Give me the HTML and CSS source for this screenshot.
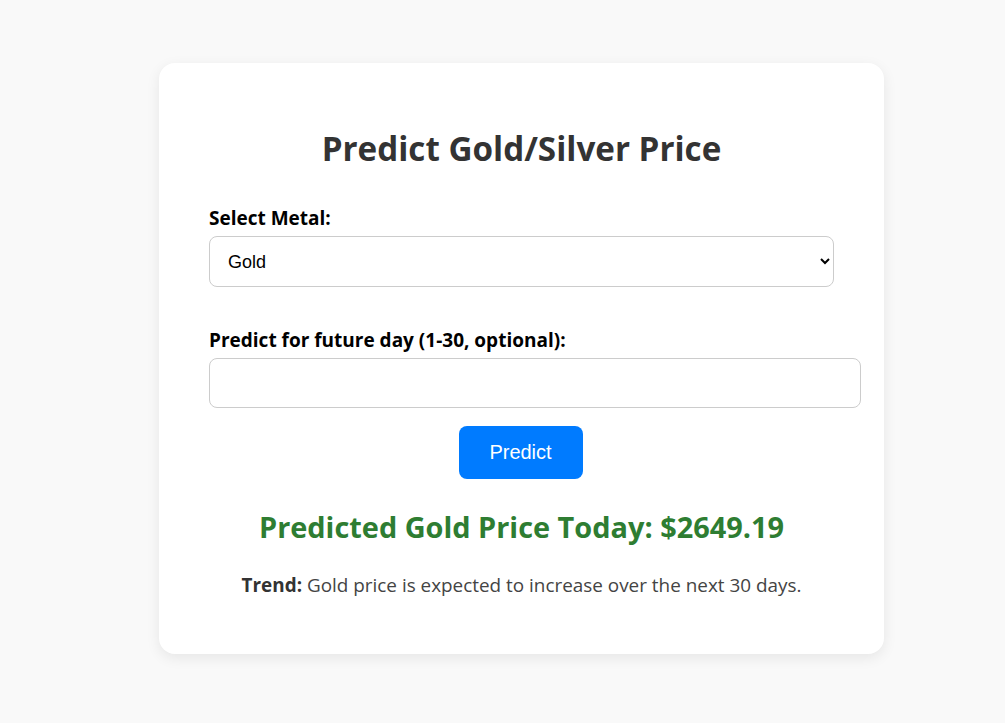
FILE: index.html
```html
<!DOCTYPE html>
<html lang="en">
<head>
<meta charset="utf-8">
<title>Predict Gold/Silver Price</title>
<link rel="stylesheet" href="styles.css">
</head>
<body>
<div class="card">
  <h1 class="title">Predict Gold/Silver Price</h1>
  <form class="form">
    <label class="label" for="metal">Select Metal:</label>
    <select class="select" id="metal">
      <option>Gold</option>
      <option>Silver</option>
    </select>
    <label class="label label-day" for="day">Predict for future day (1-30, optional):</label>
    <input class="input" id="day" type="number">
    <div class="actions"><button class="btn" type="button">Predict</button></div>
  </form>
  <h2 class="result">Predicted Gold Price Today: $2649.19</h2>
  <p class="trend"><strong>Trend:</strong> Gold price is expected to increase over the next 30 days.</p>
</div>
</body>
</html>
```

FILE: styles.css
```css
html, body {
  margin: 0;
  padding: 0;
}
body {
  background: #f9f9f9;
  font-family: "Open Sans", "Noto Sans", sans-serif;
  color: #333;
  width: 1005px;
  height: 723px;
  overflow: hidden;
}
.card {
  box-sizing: border-box;
  width: 725px;
  margin: 63px 0 0 159px;
  padding: 50px 50px 56px;
  background: #fff;
  border-radius: 16px;
  box-shadow: 0 4px 14px rgba(0, 0, 0, 0.08);
}
.title {
  margin: 13px 0 34px;
  text-align: center;
  font-size: 33.2px;
  font-weight: 700;
  color: #333;
}
.form {
  display: flex;
  flex-direction: column;
}
.label {
  font-size: 19px;
  font-weight: 700;
  color: #000;
  margin-bottom: 5px;
}
.label-day {
  margin-top: 40px;
}
.select {
  width: 625px;
  height: 51px;
  padding: 0 14px;
  font-family: "Liberation Sans", Arial, sans-serif;
  font-size: 18px;
  color: #000;
  background: #fff;
  border: 1px solid #ccc;
  border-radius: 8px;
}
.input {
  box-sizing: border-box;
  width: 652px;
  height: 50px;
  padding: 0 12px;
  font-size: 18px;
  border: 1px solid #ccc;
  border-radius: 8px;
}
.actions {
  display: flex;
  justify-content: center;
  margin-top: 18px;
  padding-right: 2px;
}
.btn {
  width: 124px;
  height: 53px;
  background: #007bff;
  color: #fff;
  border: none;
  border-radius: 8px;
  font-family: "Liberation Sans", Arial, sans-serif;
  font-size: 20px;
}
.result {
  margin: 28px 0 0;
  text-align: center;
  font-size: 28.9px;
  font-weight: 700;
  color: #2e7d32;
}
.trend {
  margin: 26px 0 0;
  text-align: center;
  font-size: 18.9px;
  color: #444;
}
.trend strong {
  color: #333;
}
```
